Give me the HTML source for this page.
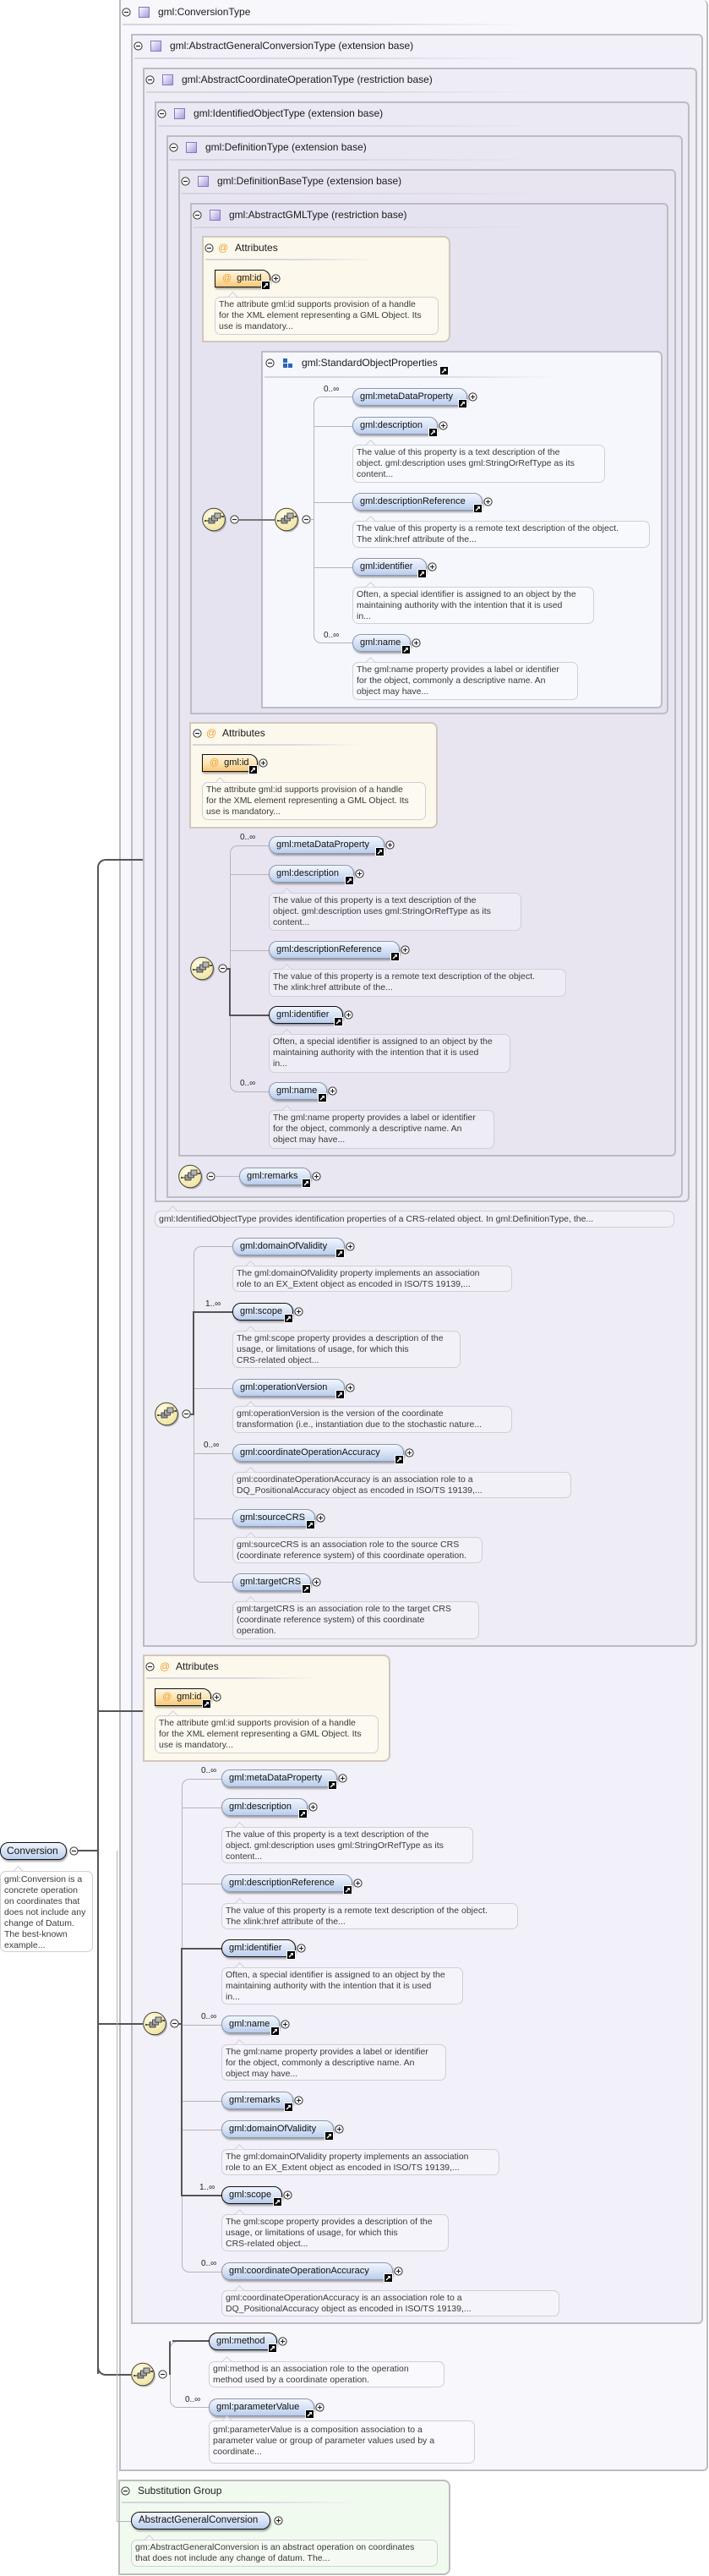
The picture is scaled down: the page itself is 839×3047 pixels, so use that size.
<!DOCTYPE html>
<html><head><meta charset="utf-8">
<style>
*{margin:0;padding:0}
body{width:839px;height:3047px;position:relative;background:#fff;font-family:"Liberation Sans",sans-serif;color:#222;overflow:hidden}
.b{position:absolute;border:2px solid #bdbcc4;border-radius:0 6px 6px 0;box-sizing:border-box}
.t{position:absolute;font-size:12px;line-height:14px;white-space:nowrap;color:#1a1a1a}
.sep{position:absolute;height:2px;background:linear-gradient(to right,#d6d4de,#dcdae3 60%,rgba(220,218,227,0))}
.i{position:absolute;width:11px;height:11px;overflow:visible}
.sqi{position:absolute;width:13px;height:13px}
.p{position:absolute;height:21px;border:1px solid #8d98ad;border-radius:10px;background:linear-gradient(#f2f6fd,#d7e3f6 50%,#b9cdec);font-size:11px;line-height:19px;padding-left:8px;box-sizing:border-box;box-shadow:1px 2px 2px rgba(0,0,0,.35);white-space:nowrap;color:#111}
.p.k{border:1.5px solid #111}
.p.a{background:linear-gradient(#fff6e4,#fde2ae 55%,#f8c775);border:1.5px solid #111;border-radius:0 10px 10px 0}
.p.a span{color:#eea030;margin-right:6px}
.d{position:absolute;border:1px solid #d0ced8;border-radius:7px;background:rgba(255,255,255,.28);font-size:10.5px;line-height:13px;color:#3a3a3a;padding:2px 4px;box-sizing:border-box;white-space:nowrap}
.d:before{content:"";position:absolute;left:16px;top:-5px;width:8px;height:8px;border-left:1px solid #d0ced8;border-top:1px solid #d0ced8;transform:rotate(45deg);background:inherit}
.att{position:absolute;background:#fdf8ec;border:2px solid #cfc8bb;border-radius:0 8px 8px 0;box-sizing:border-box}
.m{position:absolute;font-size:10px;color:#222;white-space:nowrap}
.br{position:absolute;border:1px solid #b4b3bc;border-right:none;border-radius:9px 0 0 9px;box-sizing:border-box}
.h{position:absolute;height:1px;background:#b4b3bc}
.tk{position:absolute;background:#555}
.s{position:absolute;width:30px;height:30px}
</style></head><body>
<svg width="0" height="0" style="position:absolute">
<defs>
<radialGradient id="sg" cx="40%" cy="35%" r="70%"><stop offset="0" stop-color="#fffde8"/><stop offset="1" stop-color="#efe29a"/></radialGradient>
<linearGradient id="qg" x1="0" y1="0" x2="1" y2="1"><stop offset="0" stop-color="#ffffff"/><stop offset="1" stop-color="#a597da"/></linearGradient>
<symbol id="mi" viewBox="0 0 11 11"><circle cx="5.5" cy="5.5" r="4.6" fill="#fff" stroke="#333" stroke-width="1"/><path d="M3 5.5H8" stroke="#222" stroke-width="1.2"/></symbol>
<symbol id="pl" viewBox="0 0 11 11"><circle cx="5.5" cy="5.5" r="4.6" fill="#fff" stroke="#333" stroke-width="1"/><path d="M3 5.5H8M5.5 3V8" stroke="#222" stroke-width="1.1"/></symbol>
<symbol id="lk" viewBox="0 0 11 11"><rect x="0" y="0" width="11" height="11" fill="#fff"/><rect x="1" y="1" width="9" height="9" fill="#000"/><path d="M3 8L7.5 3.5" stroke="#fff" stroke-width="1.4"/><path d="M4.5 3H8V6.5Z" fill="#fff"/></symbol>
<symbol id="sq" viewBox="0 0 13 13"><rect x=".5" y=".5" width="12" height="12" fill="url(#qg)" stroke="#8676c6"/></symbol>
<symbol id="seq" viewBox="0 0 30 30"><circle cx="15.5" cy="16" r="13.5" fill="rgba(0,0,0,.25)"/><circle cx="14" cy="14.5" r="13.3" fill="url(#sg)" stroke="#444" stroke-width="1"/><path d="M4 16H8M22 11H25" stroke="#222" stroke-width="1"/><rect x="8" y="13" width="7" height="6" fill="#9a9a9a" stroke="#333" stroke-width=".8"/><rect x="11.5" y="10" width="7" height="6" fill="#a8a8a8" stroke="#333" stroke-width=".8"/><rect x="15" y="7" width="7" height="6" fill="#b5b5b5" stroke="#333" stroke-width=".8"/><circle cx="4" cy="16" r="1" fill="#222"/><circle cx="25" cy="11" r="1" fill="#222"/></symbol>
<symbol id="grp" viewBox="0 0 13 13"><rect x="1" y="1" width="5" height="5" fill="#2a67b8"/><rect x="1" y="7" width="5" height="5" fill="#2a67b8"/><rect x="7" y="7" width="5" height="5" fill="#2a67b8"/></symbol>
</defs></svg>

<!-- nested boxes -->
<div class="b" style="left:141px;top:0;width:697px;height:2923px;background:#f8f7fc;border-top:none"></div>
<div class="b" style="left:155px;top:40px;width:677px;height:2709px;background:#f2f0f8"></div>
<div class="b" style="left:169px;top:80px;width:656px;height:1868px;background:#eeecf5"></div>
<div class="b" style="left:183px;top:120px;width:633px;height:1302px;background:#ebe9f3"></div>
<div class="b" style="left:197px;top:160px;width:611px;height:1257px;background:#e9e7f2"></div>
<div class="b" style="left:211px;top:200px;width:589px;height:1168px;background:#e8e5f1"></div>
<div class="b" style="left:225px;top:240px;width:566px;height:605px;background:#e6e3f0"></div>

<!-- titles -->
<svg class="i" style="left:144px;top:9px"><use href="#mi"/></svg><svg class="sqi" style="left:164px;top:8px"><use href="#sq"/></svg><div class="t" style="left:187px;top:7px">gml:ConversionType</div><div class="sep" style="left:145px;top:28px;width:480px"></div>
<svg class="i" style="left:158px;top:49px"><use href="#mi"/></svg><svg class="sqi" style="left:178px;top:48px"><use href="#sq"/></svg><div class="t" style="left:201px;top:47px">gml:AbstractGeneralConversionType (extension base)</div><div class="sep" style="left:159px;top:68px;width:470px"></div>
<svg class="i" style="left:172px;top:89px"><use href="#mi"/></svg><svg class="sqi" style="left:192px;top:88px"><use href="#sq"/></svg><div class="t" style="left:215px;top:87px">gml:AbstractCoordinateOperationType (restriction base)</div><div class="sep" style="left:173px;top:108px;width:460px"></div>
<svg class="i" style="left:186px;top:129px"><use href="#mi"/></svg><svg class="sqi" style="left:206px;top:128px"><use href="#sq"/></svg><div class="t" style="left:229px;top:127px">gml:IdentifiedObjectType (extension base)</div><div class="sep" style="left:187px;top:148px;width:450px"></div>
<svg class="i" style="left:200px;top:169px"><use href="#mi"/></svg><svg class="sqi" style="left:220px;top:168px"><use href="#sq"/></svg><div class="t" style="left:243px;top:167px">gml:DefinitionType (extension base)</div><div class="sep" style="left:201px;top:188px;width:440px"></div>
<svg class="i" style="left:214px;top:209px"><use href="#mi"/></svg><svg class="sqi" style="left:234px;top:208px"><use href="#sq"/></svg><div class="t" style="left:257px;top:207px">gml:DefinitionBaseType (extension base)</div><div class="sep" style="left:215px;top:228px;width:430px"></div>
<svg class="i" style="left:228px;top:249px"><use href="#mi"/></svg><svg class="sqi" style="left:248px;top:248px"><use href="#sq"/></svg><div class="t" style="left:271px;top:247px">gml:AbstractGMLType (restriction base)</div><div class="sep" style="left:229px;top:268px;width:420px"></div>

<!-- Attributes 1 -->
<div class="att" style="left:239px;top:279px;width:294px;height:126px"></div>
<svg class="i" style="left:242px;top:288px"><use href="#mi"/></svg><div class="t" style="left:258px;top:286px;color:#eea030">@</div><div class="t" style="left:278px;top:286px">Attributes</div><div class="sep" style="left:243px;top:306px;width:200px"></div>
<div class="p a" style="left:254px;top:319px;width:66px"><span>@</span>gml:id</div><svg class="i" style="left:309px;top:332px"><use href="#lk"/></svg><svg class="i" style="left:321px;top:324px"><use href="#pl"/></svg>
<div class="d" style="left:254px;top:351px;width:265px;height:45px">The attribute gml:id supports provision of a handle<br>for the XML element representing a GML Object. Its<br>use is mandatory...</div>

<!-- StandardObjectProperties -->
<div class="b" style="left:309px;top:415px;width:475px;height:423px;background:#f6f7fc"></div>
<svg class="i" style="left:314px;top:424px"><use href="#mi"/></svg><svg class="sqi" style="left:334px;top:423px"><use href="#grp"/></svg><div class="t" style="left:357px;top:422px">gml:StandardObjectProperties</div><svg class="i" style="left:520px;top:433px"><use href="#lk"/></svg><div class="sep" style="left:313px;top:445px;width:350px"></div>

<svg class="s" style="left:239px;top:600px"><use href="#seq"/></svg><svg class="i" style="left:272px;top:609px"><use href="#mi"/></svg>
<div class="tk" style="left:282px;top:614px;width:43px;height:1.5px;background:#777"></div>
<svg class="s" style="left:325px;top:600px"><use href="#seq"/></svg><svg class="i" style="left:357px;top:609px"><use href="#mi"/></svg>
<div class="h" style="left:367px;top:614px;width:4px"></div>
<div class="br" style="left:371px;top:469px;width:46px;height:292px"></div>
<div class="h" style="left:371px;top:504px;width:46px"></div><div class="h" style="left:371px;top:594px;width:46px"></div><div class="h" style="left:371px;top:671px;width:46px"></div>
<div class="m" style="left:383px;top:455px">0..∞</div>
<div class="p" style="left:417px;top:459px;width:136px">gml:metaDataProperty</div><svg class="i" style="left:542px;top:472px"><use href="#lk"/></svg><svg class="i" style="left:554px;top:464px"><use href="#pl"/></svg>
<div class="p" style="left:417px;top:493px;width:101px">gml:description</div><svg class="i" style="left:507px;top:506px"><use href="#lk"/></svg><svg class="i" style="left:519px;top:498px"><use href="#pl"/></svg>
<div class="d" style="left:417px;top:526px;width:299px;height:45px">The value of this property is a text description of the<br>object. gml:description uses gml:StringOrRefType as its<br>content...</div>
<div class="p" style="left:417px;top:583px;width:154px">gml:descriptionReference</div><svg class="i" style="left:560px;top:596px"><use href="#lk"/></svg><svg class="i" style="left:572px;top:588px"><use href="#pl"/></svg>
<div class="d" style="left:417px;top:616px;width:352px;height:32px">The value of this property is a remote text description of the object.<br>The xlink:href attribute of the...</div>
<div class="p" style="left:417px;top:660px;width:88px">gml:identifier</div><svg class="i" style="left:494px;top:673px"><use href="#lk"/></svg><svg class="i" style="left:506px;top:665px"><use href="#pl"/></svg>
<div class="d" style="left:417px;top:694px;width:286px;height:44px">Often, a special identifier is assigned to an object by the<br>maintaining authority with the intention that it is used<br>in...</div>
<div class="m" style="left:383px;top:746px">0..∞</div>
<div class="p" style="left:417px;top:750px;width:69px">gml:name</div><svg class="i" style="left:475px;top:763px"><use href="#lk"/></svg><svg class="i" style="left:487px;top:755px"><use href="#pl"/></svg>
<div class="d" style="left:417px;top:783px;width:267px;height:45px">The gml:name property provides a label or identifier<br>for the object, commonly a descriptive name. An<br>object may have...</div>

<!-- Attributes 2 -->
<div class="att" style="left:224px;top:854px;width:294px;height:126px"></div>
<svg class="i" style="left:228px;top:862px"><use href="#mi"/></svg><div class="t" style="left:244px;top:860px;color:#eea030">@</div><div class="t" style="left:263px;top:860px">Attributes</div><div class="sep" style="left:228px;top:880px;width:200px"></div>
<div class="p a" style="left:239px;top:892px;width:66px"><span>@</span>gml:id</div><svg class="i" style="left:294px;top:905px"><use href="#lk"/></svg><svg class="i" style="left:306px;top:897px"><use href="#pl"/></svg>
<div class="d" style="left:239px;top:925px;width:265px;height:45px">The attribute gml:id supports provision of a handle<br>for the XML element representing a GML Object. Its<br>use is mandatory...</div>

<!-- Group B -->
<svg class="s" style="left:225px;top:1131px"><use href="#seq"/></svg><svg class="i" style="left:258px;top:1140px"><use href="#mi"/></svg>
<div class="h" style="left:268px;top:1145px;width:4px;background:#555;height:2px"></div>
<div class="br" style="left:272px;top:1000px;width:46px;height:292px"></div>
<div class="h" style="left:272px;top:1034px;width:46px"></div><div class="h" style="left:272px;top:1124px;width:46px"></div>
<div class="tk" style="left:271px;top:1145px;width:2px;height:57px"></div><div class="tk" style="left:271px;top:1200px;width:47px;height:2px"></div>
<div class="m" style="left:284px;top:985px">0..∞</div>
<div class="p" style="left:318px;top:989px;width:137px">gml:metaDataProperty</div><svg class="i" style="left:444px;top:1002px"><use href="#lk"/></svg><svg class="i" style="left:456px;top:994px"><use href="#pl"/></svg>
<div class="p" style="left:318px;top:1023px;width:101px">gml:description</div><svg class="i" style="left:408px;top:1036px"><use href="#lk"/></svg><svg class="i" style="left:420px;top:1028px"><use href="#pl"/></svg>
<div class="d" style="left:318px;top:1056px;width:299px;height:45px">The value of this property is a text description of the<br>object. gml:description uses gml:StringOrRefType as its<br>content...</div>
<div class="p" style="left:318px;top:1113px;width:155px">gml:descriptionReference</div><svg class="i" style="left:462px;top:1126px"><use href="#lk"/></svg><svg class="i" style="left:474px;top:1118px"><use href="#pl"/></svg>
<div class="d" style="left:318px;top:1146px;width:352px;height:33px">The value of this property is a remote text description of the object.<br>The xlink:href attribute of the...</div>
<div class="p k" style="left:318px;top:1190px;width:88px">gml:identifier</div><svg class="i" style="left:395px;top:1203px"><use href="#lk"/></svg><svg class="i" style="left:407px;top:1195px"><use href="#pl"/></svg>
<div class="d" style="left:318px;top:1223px;width:286px;height:46px">Often, a special identifier is assigned to an object by the<br>maintaining authority with the intention that it is used<br>in...</div>
<div class="m" style="left:284px;top:1276px">0..∞</div>
<div class="p" style="left:318px;top:1280px;width:69px">gml:name</div><svg class="i" style="left:376px;top:1293px"><use href="#lk"/></svg><svg class="i" style="left:388px;top:1285px"><use href="#pl"/></svg>
<div class="d" style="left:318px;top:1313px;width:267px;height:46px">The gml:name property provides a label or identifier<br>for the object, commonly a descriptive name. An<br>object may have...</div>

<!-- remarks -->
<svg class="s" style="left:211px;top:1377px"><use href="#seq"/></svg><svg class="i" style="left:244px;top:1386px"><use href="#mi"/></svg>
<div class="h" style="left:254px;top:1391px;width:29px"></div>
<div class="p" style="left:283px;top:1381px;width:85px">gml:remarks</div><svg class="i" style="left:357px;top:1394px"><use href="#lk"/></svg><svg class="i" style="left:369px;top:1386px"><use href="#pl"/></svg>

<div class="d" style="left:183px;top:1432px;width:615px;height:20px;line-height:14px">gml:IdentifiedObjectType provides identification properties of a CRS-related object. In gml:DefinitionType, the...</div>

<!-- Group C -->
<svg class="s" style="left:183px;top:1658px"><use href="#seq"/></svg><svg class="i" style="left:215px;top:1667px"><use href="#mi"/></svg>
<div class="h" style="left:225px;top:1672px;width:4px;background:#555;height:2px"></div>
<div class="br" style="left:229px;top:1474px;width:46px;height:398px"></div>
<div class="h" style="left:229px;top:1642px;width:46px"></div><div class="h" style="left:229px;top:1719px;width:46px"></div><div class="h" style="left:229px;top:1796px;width:46px"></div>
<div class="tk" style="left:228px;top:1551px;width:2px;height:123px"></div><div class="tk" style="left:228px;top:1551px;width:47px;height:2px"></div>
<div class="p" style="left:275px;top:1464px;width:133px">gml:domainOfValidity</div><svg class="i" style="left:397px;top:1477px"><use href="#lk"/></svg><svg class="i" style="left:409px;top:1469px"><use href="#pl"/></svg>
<div class="d" style="left:275px;top:1497px;width:331px;height:31px">The gml:domainOfValidity property implements an association<br>role to an EX_Extent object as encoded in ISO/TS 19139,...</div>
<div class="m" style="left:243px;top:1537px">1..∞</div>
<div class="p k" style="left:275px;top:1541px;width:72px">gml:scope</div><svg class="i" style="left:336px;top:1554px"><use href="#lk"/></svg><svg class="i" style="left:348px;top:1546px"><use href="#pl"/></svg>
<div class="d" style="left:275px;top:1574px;width:270px;height:44px">The gml:scope property provides a description of the<br>usage, or limitations of usage, for which this<br>CRS-related object...</div>
<div class="p" style="left:275px;top:1631px;width:133px">gml:operationVersion</div><svg class="i" style="left:397px;top:1644px"><use href="#lk"/></svg><svg class="i" style="left:409px;top:1636px"><use href="#pl"/></svg>
<div class="d" style="left:275px;top:1663px;width:331px;height:32px">gml:operationVersion is the version of the coordinate<br>transformation (i.e., instantiation due to the stochastic nature...</div>
<div class="m" style="left:241px;top:1704px">0..∞</div>
<div class="p" style="left:275px;top:1708px;width:203px">gml:coordinateOperationAccuracy</div><svg class="i" style="left:467px;top:1721px"><use href="#lk"/></svg><svg class="i" style="left:479px;top:1713px"><use href="#pl"/></svg>
<div class="d" style="left:275px;top:1741px;width:401px;height:31px">gml:coordinateOperationAccuracy is an association role to a<br>DQ_PositionalAccuracy object as encoded in ISO/TS 19139,...</div>
<div class="p" style="left:275px;top:1785px;width:98px">gml:sourceCRS</div><svg class="i" style="left:362px;top:1798px"><use href="#lk"/></svg><svg class="i" style="left:374px;top:1790px"><use href="#pl"/></svg>
<div class="d" style="left:275px;top:1818px;width:296px;height:31px">gml:sourceCRS is an association role to the source CRS<br>(coordinate reference system) of this coordinate operation.</div>
<div class="p" style="left:275px;top:1861px;width:93px">gml:targetCRS</div><svg class="i" style="left:357px;top:1874px"><use href="#lk"/></svg><svg class="i" style="left:369px;top:1866px"><use href="#pl"/></svg>
<div class="d" style="left:275px;top:1894px;width:292px;height:45px">gml:targetCRS is an association role to the target CRS<br>(coordinate reference system) of this coordinate<br>operation.</div>

<!-- Attributes 3 -->
<div class="att" style="left:169px;top:1957px;width:293px;height:127px"></div>
<svg class="i" style="left:172px;top:1966px"><use href="#mi"/></svg><div class="t" style="left:189px;top:1964px;color:#eea030">@</div><div class="t" style="left:208px;top:1964px">Attributes</div><div class="sep" style="left:173px;top:1984px;width:200px"></div>
<div class="p a" style="left:183px;top:1997px;width:67px"><span>@</span>gml:id</div><svg class="i" style="left:239px;top:2010px"><use href="#lk"/></svg><svg class="i" style="left:251px;top:2002px"><use href="#pl"/></svg>
<div class="d" style="left:183px;top:2029px;width:265px;height:45px">The attribute gml:id supports provision of a handle<br>for the XML element representing a GML Object. Its<br>use is mandatory...</div>

<!-- Group D -->
<svg class="s" style="left:169px;top:2379px"><use href="#seq"/></svg><svg class="i" style="left:201px;top:2388px"><use href="#mi"/></svg>
<div class="h" style="left:211px;top:2393px;width:4px;background:#555;height:2px"></div>
<div class="br" style="left:215px;top:2104px;width:47px;height:584px"></div>
<div class="h" style="left:215px;top:2138px;width:47px"></div><div class="h" style="left:215px;top:2228px;width:47px"></div><div class="h" style="left:215px;top:2395px;width:47px"></div><div class="h" style="left:215px;top:2485px;width:47px"></div><div class="h" style="left:215px;top:2519px;width:47px"></div>
<div class="tk" style="left:214px;top:2304px;width:2px;height:294px"></div><div class="tk" style="left:214px;top:2304px;width:48px;height:2px"></div><div class="tk" style="left:214px;top:2596px;width:48px;height:2px"></div>
<div class="m" style="left:238px;top:2089px">0..∞</div>
<div class="p" style="left:262px;top:2093px;width:137px">gml:metaDataProperty</div><svg class="i" style="left:388px;top:2106px"><use href="#lk"/></svg><svg class="i" style="left:400px;top:2098px"><use href="#pl"/></svg>
<div class="p" style="left:262px;top:2127px;width:102px">gml:description</div><svg class="i" style="left:353px;top:2140px"><use href="#lk"/></svg><svg class="i" style="left:365px;top:2132px"><use href="#pl"/></svg>
<div class="d" style="left:262px;top:2161px;width:298px;height:43px">The value of this property is a text description of the<br>object. gml:description uses gml:StringOrRefType as its<br>content...</div>
<div class="p" style="left:262px;top:2217px;width:155px">gml:descriptionReference</div><svg class="i" style="left:406px;top:2230px"><use href="#lk"/></svg><svg class="i" style="left:418px;top:2222px"><use href="#pl"/></svg>
<div class="d" style="left:262px;top:2251px;width:351px;height:31px">The value of this property is a remote text description of the object.<br>The xlink:href attribute of the...</div>
<div class="p k" style="left:262px;top:2294px;width:88px">gml:identifier</div><svg class="i" style="left:339px;top:2307px"><use href="#lk"/></svg><svg class="i" style="left:351px;top:2299px"><use href="#pl"/></svg>
<div class="d" style="left:262px;top:2327px;width:286px;height:44px">Often, a special identifier is assigned to an object by the<br>maintaining authority with the intention that it is used<br>in...</div>
<div class="m" style="left:238px;top:2380px">0..∞</div>
<div class="p" style="left:262px;top:2384px;width:69px">gml:name</div><svg class="i" style="left:320px;top:2397px"><use href="#lk"/></svg><svg class="i" style="left:332px;top:2389px"><use href="#pl"/></svg>
<div class="d" style="left:262px;top:2418px;width:266px;height:43px">The gml:name property provides a label or identifier<br>for the object, commonly a descriptive name. An<br>object may have...</div>
<div class="p" style="left:262px;top:2474px;width:85px">gml:remarks</div><svg class="i" style="left:336px;top:2487px"><use href="#lk"/></svg><svg class="i" style="left:348px;top:2479px"><use href="#pl"/></svg>
<div class="p" style="left:262px;top:2508px;width:133px">gml:domainOfValidity</div><svg class="i" style="left:384px;top:2521px"><use href="#lk"/></svg><svg class="i" style="left:396px;top:2513px"><use href="#pl"/></svg>
<div class="d" style="left:262px;top:2542px;width:329px;height:31px">The gml:domainOfValidity property implements an association<br>role to an EX_Extent object as encoded in ISO/TS 19139,...</div>
<div class="m" style="left:236px;top:2582px">1..∞</div>
<div class="p k" style="left:262px;top:2586px;width:72px">gml:scope</div><svg class="i" style="left:323px;top:2599px"><use href="#lk"/></svg><svg class="i" style="left:335px;top:2591px"><use href="#pl"/></svg>
<div class="d" style="left:262px;top:2619px;width:269px;height:44px">The gml:scope property provides a description of the<br>usage, or limitations of usage, for which this<br>CRS-related object...</div>
<div class="m" style="left:238px;top:2672px">0..∞</div>
<div class="p" style="left:262px;top:2676px;width:203px">gml:coordinateOperationAccuracy</div><svg class="i" style="left:454px;top:2689px"><use href="#lk"/></svg><svg class="i" style="left:466px;top:2681px"><use href="#pl"/></svg>
<div class="d" style="left:262px;top:2709px;width:400px;height:31px">gml:coordinateOperationAccuracy is an association role to a<br>DQ_PositionalAccuracy object as encoded in ISO/TS 19139,...</div>

<!-- Group E -->
<svg class="s" style="left:155px;top:2794px"><use href="#seq"/></svg><svg class="i" style="left:187px;top:2803px"><use href="#mi"/></svg>
<div class="br" style="left:201px;top:2769px;width:46px;height:79px"></div>
<div class="tk" style="left:200px;top:2769px;width:2px;height:40px;border-radius:6px 0 0 0"></div><div class="tk" style="left:204px;top:2768px;width:43px;height:2px"></div>
<div class="p k" style="left:247px;top:2759px;width:81px">gml:method</div><svg class="i" style="left:317px;top:2772px"><use href="#lk"/></svg><svg class="i" style="left:329px;top:2764px"><use href="#pl"/></svg>
<div class="d" style="left:247px;top:2793px;width:279px;height:31px">gml:method is an association role to the operation<br>method used by a coordinate operation.</div>
<div class="m" style="left:219px;top:2833px">0..∞</div>
<div class="p" style="left:247px;top:2837px;width:125px">gml:parameterValue</div><svg class="i" style="left:361px;top:2850px"><use href="#lk"/></svg><svg class="i" style="left:373px;top:2842px"><use href="#pl"/></svg>
<div class="d" style="left:247px;top:2863px;width:315px;height:51px;padding-top:4px">gml:parameterValue is a composition association to a<br>parameter value or group of parameter values used by a<br>coordinate...</div>

<!-- trunk -->
<div style="position:absolute;left:115px;top:1016px;width:54px;height:1792px;border-left:2px solid #555;border-top:2px solid #555;border-radius:10px 0 0 0;box-sizing:border-box"></div>
<div style="position:absolute;left:115px;top:2790px;width:40px;height:20px;border-left:2px solid #555;border-bottom:2px solid #555;border-radius:0 0 0 10px;box-sizing:border-box"></div>
<div class="tk" style="left:116px;top:2023px;width:53px;height:2px"></div>
<div class="tk" style="left:92px;top:2188px;width:24px;height:2px"></div>
<div class="tk" style="left:116px;top:2393px;width:53px;height:2px"></div>
<div class="h" style="left:138px;top:2189px;width:1px;height:793px"></div>
<div class="h" style="left:138px;top:2982px;width:17px"></div>

<!-- Conversion -->
<div class="p k" style="left:0;top:2179px;width:79px;font-size:12px;padding-left:7px">Conversion</div><svg class="i" style="left:82px;top:2184px"><use href="#mi"/></svg>
<div class="d" style="left:0;top:2213px;width:110px;height:96px;padding-top:3px">gml:Conversion is a<br>concrete operation<br>on coordinates that<br>does not include any<br>change of Datum.<br>The best-known<br>example...</div>

<!-- Substitution group -->
<div style="position:absolute;left:140px;top:2933px;width:393px;height:113px;background:#f1faef;border:2px solid #bdbdbd;border-radius:0 8px 8px 0;box-sizing:border-box"></div>
<svg class="i" style="left:143px;top:2941px"><use href="#mi"/></svg><div class="t" style="left:163px;top:2939px">Substitution Group</div><div class="sep" style="left:144px;top:2959px;width:280px"></div>
<div class="h" style="left:138px;top:2982px;width:17px"></div>
<div class="p k" style="left:155px;top:2971px;width:165px;font-size:11.5px">AbstractGeneralConversion</div><svg class="i" style="left:324px;top:2976px"><use href="#pl"/></svg>
<div class="d" style="left:155px;top:3004px;width:363px;height:32px">gm:AbstractGeneralConversion is an abstract operation on coordinates<br>that does not include any change of datum. The...</div>
</body></html>
